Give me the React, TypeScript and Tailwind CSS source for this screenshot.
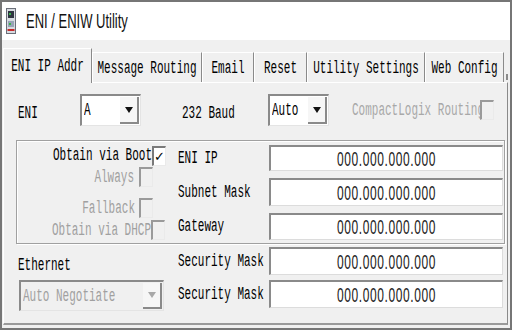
import type { ReactNode } from 'react';

const mono = "font-['Liberation_Mono',monospace] text-[11px]";

function T({ children, className }: { children: ReactNode; className?: string }) {
  return (
    <span className={`inline-block scale-y-[1.7] leading-none whitespace-nowrap ${className ?? ''}`}>{children}</span>
  );
}

function Arrow({ disabled }: { disabled?: boolean }) {
  return (
    <svg width="8" height="6" viewBox="0 0 8 6">
      <path d="M0 0 H8 L4 6 Z" fill={disabled ? '#a8a8a8' : '#111'} />
    </svg>
  );
}

function Combo({ value, className, disabled }: { value: string; className: string; disabled?: boolean }) {
  return (
    <div
      className={`${className} flex border-t-2 border-l-2 border-r border-b border-t-[#8a8a8a] border-l-[#8a8a8a] border-r-[#e4e4e4] border-b-[#e4e4e4] ${disabled ? 'bg-[#f0f0f0]' : 'bg-white'}`}
    >
      <div className="flex-1 flex items-center pl-[2px] overflow-hidden">
        <T className={`${mono} ${disabled ? 'text-[#a0a0a0]' : 'text-black'}`}>{value}</T>
      </div>
      <div className="w-[19px] my-[1px] mr-[1px] flex items-center justify-center bg-[#f6f6f6] border-r-2 border-b-2 border-[#8a8a8a]">
        <Arrow disabled={disabled} />
      </div>
    </div>
  );
}

function IpField({ className }: { className: string }) {
  return (
    <div
      className={`${className} w-[234px] bg-white flex items-center justify-center border-t-2 border-l-2 border-r border-b border-t-[#8a8a8a] border-l-[#8a8a8a] border-r-[#dcdcdc] border-b-[#dcdcdc]`}
    >
      <T className="font-['Liberation_Sans',sans-serif] text-[12px] tracking-[0.6px] text-[#222]">000.000.000.000</T>
    </div>
  );
}

function Check({ checked, disabled }: { checked?: boolean; disabled?: boolean }) {
  return (
    <div
      className={`w-[14px] h-[20px] shrink-0 flex items-center justify-center border-t-2 border-l-2 border-r border-b border-r-[#eaeaea] border-b-[#eaeaea] ${disabled ? 'border-t-[#9a9a9a] border-l-[#9a9a9a] bg-[#f0f0f0]' : 'border-t-[#7a7a7a] border-l-[#7a7a7a] bg-white'}`}
    >
      {checked && <span className="text-[13px] leading-none font-bold text-black font-['DejaVu_Sans',sans-serif]">✓</span>}
    </div>
  );
}

function Label({ children, className }: { children: ReactNode; className?: string }) {
  return (
    <div className={`w-[91px] flex items-center ${className ?? ''}`}>
      <T className={`${mono} text-black`}>{children}</T>
    </div>
  );
}

const tabs = [
  { name: 'Message Routing', w: 'w-[110px]' },
  { name: 'Email', w: 'w-[52px]' },
  { name: 'Reset', w: 'w-[53px]' },
  { name: 'Utility Settings', w: 'w-[118px]' },
  { name: 'Web Config', w: 'w-[79px]' },
];

export default function App() {
  return (
    <div className="w-[512px] h-[330px] border-2 border-[#767676] bg-[#f0f0f0] flex flex-col overflow-hidden">
      {/* title */}
      <div className="h-[38px] bg-white flex items-center pl-[4px] shrink-0">
        <svg width="10" height="26" viewBox="0 0 10 26">
          <rect x="0.5" y="0.5" width="9" height="25" fill="#d6dae0" stroke="#6a6e78" />
          <rect x="2" y="3" width="6" height="7" fill="#2e3440" />
          <rect x="3" y="5" width="2" height="2" fill="#39b54a" />
          <rect x="2" y="13" width="6" height="6" fill="#97a3b6" />
          <rect x="3" y="15" width="2" height="2" fill="#39b54a" />
          <rect x="1.5" y="21" width="7" height="2" fill="#c62828" />
        </svg>
        <span className="ml-[10px] inline-block leading-none whitespace-nowrap scale-y-[1.5] font-['Liberation_Sans',sans-serif] text-[13px] text-[#111]">
          ENI / ENIW Utility
        </span>
      </div>

      {/* tabs */}
      <div className="h-[42px] flex items-end pl-[1px] shrink-0">
        <div className="w-[89px] h-[35px] -mb-px relative z-10 bg-[#f0f0f0] border-t border-l border-white border-r border-r-[#8a8a8a] flex items-center justify-center">
          <T className={`${mono} text-black`}>ENI IP Addr</T>
        </div>
        {tabs.map((t) => (
          <div
            key={t.name}
            className={`${t.w} h-[30px] bg-[#f0f0f0] border-t border-l border-white border-r border-r-[#8a8a8a] flex items-center justify-center pt-[2px]`}
          >
            <T className={`${mono} text-black`}>{t.name}</T>
          </div>
        ))}
        <div className="ml-[2px] mb-[2px] w-[2px] h-[6px] bg-[#8a8a8a]" />
      </div>

      {/* panel */}
      <div className="flex-1 ml-[1px] mr-[2px] mb-[3px] border border-white border-r-[#8a8a8a] border-b-2 border-b-[#9a9a9a] flex flex-col">
        {/* row 1 */}
        <div className="mt-[11px] h-[32px] flex items-center pl-[14px]">
          <div className="w-[62px]">
            <T className={`${mono} text-black`}>ENI</T>
          </div>
          <Combo value="A" className="w-[61px] h-[32px]" />
          <div className="ml-[41px] w-[86px]">
            <T className={`${mono} text-black`}>232 Baud</T>
          </div>
          <Combo value="Auto" className="w-[61px] h-[32px]" />
          <div className="ml-[23px] h-[32px] flex items-center">
            <T className={`${mono} text-[#a8a8a8]`}>CompactLogix Routing</T>
          </div>
          <div className="-ml-[4px] relative z-10">
            <Check disabled />
          </div>
        </div>

        {/* group box */}
        <div className="mt-[14px] ml-[12px] w-[489px] h-[104px] border border-[#a0a0a0] shadow-[inset_1px_1px_0_#fff,1px_1px_0_#fff] flex">
          <div className="w-[149px] flex flex-col">
            <div className="mt-[4px] h-[21px] flex items-center justify-end">
              <T className={`${mono} text-black`}>Obtain via Boot</T>
              <Check checked />
            </div>
            <div className="mt-[1px] h-[20px] flex items-center justify-end gap-[5px] pr-[13px]">
              <T className={`${mono} text-[#a0a0a0]`}>Always</T>
              <Check disabled />
            </div>
            <div className="mt-[11px] h-[20px] flex items-center justify-end gap-[4px] pr-[13px]">
              <T className={`${mono} text-[#a0a0a0]`}>Fallback</T>
              <Check disabled />
            </div>
            <div className="mt-[2px] h-[20px] flex items-center justify-end pr-[1px]">
              <T className={`${mono} text-[#a0a0a0]`}>Obtain via DHCP</T>
              <Check disabled />
            </div>
          </div>
          <div className="ml-[12px] mt-[4px] flex flex-col gap-[7px]">
            <div className="flex">
              <Label>ENI IP</Label>
              <IpField className="h-[26px]" />
            </div>
            <div className="flex">
              <Label>Subnet Mask</Label>
              <IpField className="h-[28px]" />
            </div>
            <div className="flex">
              <Label>Gateway</Label>
              <IpField className="h-[27px]" />
            </div>
          </div>
        </div>

        {/* bottom rows */}
        <div className="mt-[3px] flex">
          <div className="w-[174px] flex flex-col">
            <div className="h-[33px] flex items-center pl-[14px] pt-[4px]">
              <T className={`${mono} text-black`}>Ethernet</T>
            </div>
            <Combo value="Auto Negotiate" className="ml-[15px] w-[145px] h-[31px]" disabled />
          </div>
          <div className="flex flex-col gap-[5px]">
            <div className="flex">
              <Label>Security Mask</Label>
              <IpField className="h-[28px]" />
            </div>
            <div className="flex">
              <Label>Security Mask</Label>
              <IpField className="h-[28px]" />
            </div>
          </div>
        </div>
      </div>
    </div>
  );
}
